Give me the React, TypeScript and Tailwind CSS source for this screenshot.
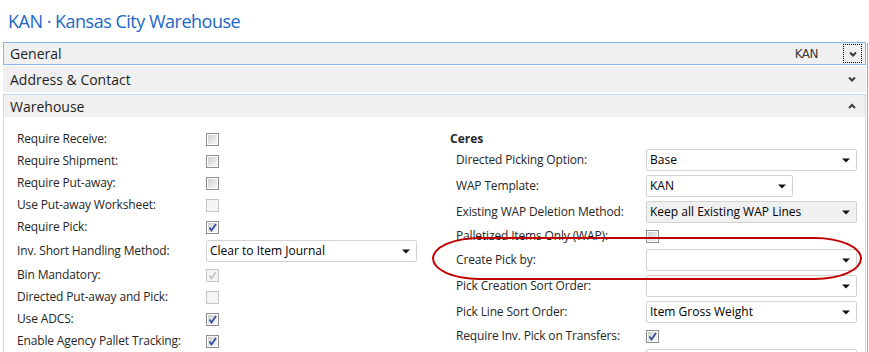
import React from 'react'

type Row =
  | { kind: 'check'; label: string; checked?: boolean; disabled?: boolean }
  | { kind: 'select'; label: string; value?: string; width?: 'full' | 'short'; disabled?: boolean }

const LEFT_ROWS: Row[] = [
  { kind: 'check', label: 'Require Receive:' },
  { kind: 'check', label: 'Require Shipment:' },
  { kind: 'check', label: 'Require Put-away:' },
  { kind: 'check', label: 'Use Put-away Worksheet:', disabled: true },
  { kind: 'check', label: 'Require Pick:', checked: true },
  { kind: 'select', label: 'Inv. Short Handling Method:', value: 'Clear to Item Journal' },
  { kind: 'check', label: 'Bin Mandatory:', checked: true, disabled: true },
  { kind: 'check', label: 'Directed Put-away and Pick:', disabled: true },
  { kind: 'check', label: 'Use ADCS:', checked: true },
  { kind: 'check', label: 'Enable Agency Pallet Tracking:', checked: true },
]

// last row is only a sliver at the bottom edge, its label is below the fold
const RIGHT_ROWS: Row[] = [
  { kind: 'select', label: 'Directed Picking Option:', value: 'Base' },
  { kind: 'select', label: 'WAP Template:', value: 'KAN', width: 'short' },
  { kind: 'select', label: 'Existing WAP Deletion Method:', value: 'Keep all Existing WAP Lines', disabled: true },
  { kind: 'check', label: 'Palletized Items Only (WAP):' },
  { kind: 'select', label: 'Create Pick by:' },
  { kind: 'select', label: 'Pick Creation Sort Order:' },
  { kind: 'select', label: 'Pick Line Sort Order:', value: 'Item Gross Weight' },
  { kind: 'check', label: 'Require Inv. Pick on Transfers:', checked: true },
  { kind: 'select', label: '' },
]

function Checkbox({ checked = false, disabled = false }: { checked?: boolean; disabled?: boolean }) {
  return (
    <span
      className={`relative block w-[13px] h-[13px] border ${
        disabled ? 'border-[#c6c6c6] bg-[#f5f5f5]' : 'border-[#8e8e8e] bg-white'
      }`}
    >
      {!disabled && (
        <span className="absolute inset-[1px] bg-gradient-to-br from-[#cdcdcd] via-[#e4e4e4] to-[#f7f7f7]" />
      )}
      {checked && (
        <svg className="absolute inset-0" width="11" height="11" viewBox="0 0 11 11">
          <path
            d="M2.5 5.5 L4.5 8.5 L9 2"
            fill="none"
            stroke={disabled ? '#c2c2c2' : '#2f4c9c'}
            strokeWidth="1.7"
          />
        </svg>
      )}
    </span>
  )
}

function Select({ value = '', short = false, disabled = false }: { value?: string; short?: boolean; disabled?: boolean }) {
  return (
    <div
      className={`flex items-center h-[22px] border border-[#d3d3d3] rounded-[2px] pl-[3px] pr-[6px] ${
        short ? 'w-[147px]' : 'w-[211px]'
      } ${disabled ? 'bg-[#f0f0f0]' : 'bg-white'}`}
    >
      <span className="flex-1 truncate text-black">{value}</span>
      <svg width="8" height="5" viewBox="0 0 8 5">
        <path d="M0 0.5 H8 L4 4.5 Z" fill="#111" />
      </svg>
    </div>
  )
}

function FieldRow({ row, labelWidth }: { row: Row; labelWidth: string }) {
  return (
    <div className={`flex items-center ${row.kind === 'check' ? 'h-[18px]' : 'h-[22px]'}`}>
      <span className={`${labelWidth} shrink-0 whitespace-nowrap text-[#262626] tracking-[-0.15px]`}>{row.label}</span>
      {row.kind === 'check' ? (
        <Checkbox checked={row.checked} disabled={row.disabled} />
      ) : (
        <Select value={row.value} short={row.width === 'short'} disabled={row.disabled} />
      )}
    </div>
  )
}

function Chevron({ up = false }: { up?: boolean }) {
  return (
    <svg width="8" height="6" viewBox="0 0 8 6">
      <polyline
        points={up ? '1,5 4,2 7,5' : '1,1.5 4,4.5 7,1.5'}
        fill="none"
        stroke="#3c3c3c"
        strokeWidth="2"
      />
    </svg>
  )
}

export default function App() {
  return (
    <div className="relative h-[352px] w-[869px] overflow-hidden bg-white font-['Segoe_UI','Open_Sans',sans-serif]">
      <div className="h-[42px] flex items-center pl-[8px] text-[18px] text-[#1a68c6] tracking-[-0.5px]">
        KAN · Kansas City Warehouse
      </div>

      <div className="flex">
        <div className="ml-[3px] w-[863px] flex flex-col">
          {/* General */}
          <div className="h-[23px] flex items-center border border-[#86b6ec] bg-[#f0f0f0] pl-[6px] pr-[3px] text-[14px] text-[#1e1e1e]">
            <span className="flex-1">General</span>
            <span className="mr-[25px] text-[12px] text-[#3a3a3a] font-['DejaVu_Sans',sans-serif] tracking-[-0.5px]">KAN</span>
            <span className="flex items-center justify-center w-[19px] h-[19px] border border-dotted border-black">
              <Chevron />
            </span>
          </div>

          {/* Address & Contact */}
          <div className="mt-[1px] h-[26px] flex items-center bg-[#f0f0f0] pl-[7px] pr-[10px] text-[14px] text-[#1e1e1e]">
            <span className="flex-1">Address &amp; Contact</span>
            <Chevron />
          </div>

          {/* Warehouse */}
          <div className="mt-[2px] border-x border-[#c6dcf4]">
            <div className="h-[23px] flex items-center border-t border-[#c6dcf4] bg-[#f0f0f0] pl-[6px] pr-[9px] text-[14px] text-[#1e1e1e]">
              <span className="flex-1">Warehouse</span>
              <Chevron up />
            </div>

            <div className="flex pt-[13px] pl-[13px] text-[12px] bg-white h-[260px]">
              <div className="w-[433px] flex flex-col gap-[4px]">
                {LEFT_ROWS.map((r, i) => (
                  <FieldRow key={i} row={r} labelWidth="w-[189px]" />
                ))}
              </div>

              <div className="flex flex-col -mt-[2px]">
                <div className="h-[21px] flex items-center font-bold text-[#262626]">Ceres</div>
                <div className="pl-[6px] flex flex-col gap-[4px]">
                  {RIGHT_ROWS.map((r, i) => (
                    <FieldRow key={i} row={r} labelWidth="w-[190px]" />
                  ))}
                </div>
              </div>
            </div>
          </div>
        </div>
        <div className="ml-[1px] mt-[1px] w-[1px] bg-[#a8a8a8]" />
      </div>

      {/* red highlight */}
      <div className="absolute left-[432px] top-[237px] w-[430px] h-[43px] border-2 border-[#c00000] rounded-[48px/22px]" />
    </div>
  )
}
